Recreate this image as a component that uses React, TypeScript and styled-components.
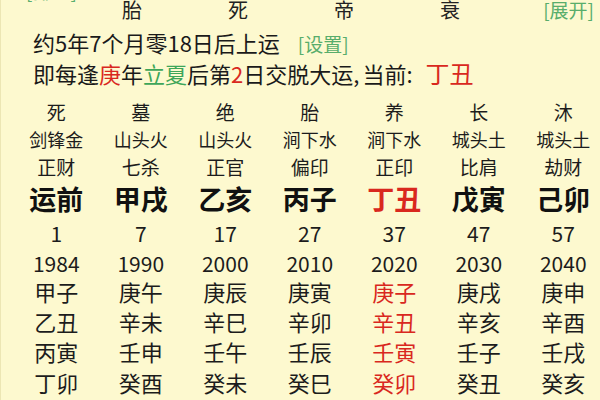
import React from "react";
import styled, { createGlobalStyle } from "styled-components";

const Global = createGlobalStyle`
  html, body { margin: 0; padding: 0; background: #fdf9cf; }
  body { font-family: "Noto Sans CJK SC", "Noto Sans", sans-serif; color: #1a1a1a; }
`;

const Screen = styled.div`
  width: 600px;
  height: 400px;
  overflow: hidden;
  background: #fdf9cf;
  border-left: 1px solid #ece6b4;
  box-sizing: border-box;
`;

const Scroller = styled.div`
  margin-top: -19px;
`;

const HiddenRow = styled.div`
  height: 20px;
  line-height: 20px;
  font-size: 19px;
  padding-left: 25px;
  color: #5aae6e;
`;

const TopRow = styled.div`
  display: grid;
  grid-template-columns: 78px repeat(4, 106px) 1fr;
  height: 18px;
  line-height: 18px;
  font-size: 20px;
  color: #222;
`;

const TopCell = styled.div`
  text-align: center;
`;

const Link = styled.span`
  color: #58ad6b;
  font-size: 19px;
`;

const TopLink = styled(Link)`
  justify-self: end;
  padding-right: 6px;
`;

const InfoLine = styled.div<{ $lh: number; $mt?: number }>`
  padding-left: 32px;
  font-size: 22px;
  line-height: ${(p) => p.$lh}px;
  height: ${(p) => p.$lh}px;
  margin-top: ${(p) => p.$mt ?? 0}px;
  white-space: nowrap;
  color: #1a1a1a;
`;

const Setting = styled(Link)`
  margin-left: 18px;
`;

const Red = styled.span`
  color: #d9281e;
`;

const Green = styled.span`
  color: #3ea659;
`;

const Punct = styled.span`
  margin-right: 3px;
`;

const Current = styled.span`
  color: #d9281e;
  font-size: 24px;
  margin-left: 10px;
`;

const Table = styled.div`
  margin-top: 8px;
  padding-left: 13px;
`;

const Row = styled.div<{ $h: number; $fs: number; $bold?: boolean }>`
  display: grid;
  grid-template-columns: repeat(7, 84.5px);
  height: ${(p) => p.$h}px;
  line-height: ${(p) => p.$h}px;
  font-size: ${(p) => p.$fs}px;
  font-weight: ${(p) => (p.$bold ? 700 : 400)};
  color: ${(p) => (p.$bold ? "#111" : "#1c1c1c")};
`;

const Cell = styled.div<{ $red?: boolean }>`
  text-align: center;
  white-space: nowrap;
  color: ${(p) => (p.$red ? "#d9281e" : "inherit")};
`;

type RowDef = { cells: string[]; h: number; fs: number; bold?: boolean; redCurrent?: boolean };

const CUR = 4;

const rows: RowDef[] = [
  { cells: ["死", "墓", "绝", "胎", "养", "长", "沐"], h: 29, fs: 19 },
  { cells: ["剑锋金", "山头火", "山头火", "涧下水", "涧下水", "城头土", "城头土"], h: 27, fs: 18 },
  { cells: ["正财", "七杀", "正官", "偏印", "正印", "比肩", "劫财"], h: 28, fs: 19 },
  { cells: ["运前", "甲戌", "乙亥", "丙子", "丁丑", "戊寅", "己卯"], h: 35, fs: 27, bold: true, redCurrent: true },
  { cells: ["1", "7", "17", "27", "37", "47", "57"], h: 34, fs: 21 },
  { cells: ["1984", "1990", "2000", "2010", "2020", "2030", "2040"], h: 26, fs: 21 },
  { cells: ["甲子", "庚午", "庚辰", "庚寅", "庚子", "庚戌", "庚申"], h: 30, fs: 22, redCurrent: true },
  { cells: ["乙丑", "辛未", "辛巳", "辛卯", "辛丑", "辛亥", "辛酉"], h: 30, fs: 22, redCurrent: true },
  { cells: ["丙寅", "壬申", "壬午", "壬辰", "壬寅", "壬子", "壬戌"], h: 30, fs: 22, redCurrent: true },
  { cells: ["丁卯", "癸酉", "癸未", "癸巳", "癸卯", "癸丑", "癸亥"], h: 32, fs: 22, redCurrent: true },
];

export default function App() {
  return (
    <>
      <Global />
      <Screen>
        <Scroller>
          <HiddenRow>[排盘]</HiddenRow>
          <TopRow>
            <div />
            <TopCell>胎</TopCell>
            <TopCell>死</TopCell>
            <TopCell>帝</TopCell>
            <TopCell>衰</TopCell>
            <TopLink>[展开]</TopLink>
          </TopRow>
          <InfoLine $lh={28} $mt={9}>
            约5年7个月零18日后上运<Setting>[设置]</Setting>
          </InfoLine>
          <InfoLine $lh={33}>
            即每逢<Red>庚</Red>年<Green>立夏</Green>后第<Red>2</Red>日交脱大运<Punct>,</Punct>当前<Punct>:</Punct>
            <Current>丁丑</Current>
          </InfoLine>
          <Table>
            {rows.map((r, i) => (
              <Row key={i} $h={r.h} $fs={r.fs} $bold={r.bold}>
                {r.cells.map((c, j) => (
                  <Cell key={j} $red={r.redCurrent && j === CUR}>
                    {c}
                  </Cell>
                ))}
              </Row>
            ))}
          </Table>
        </Scroller>
      </Screen>
    </>
  );
}
